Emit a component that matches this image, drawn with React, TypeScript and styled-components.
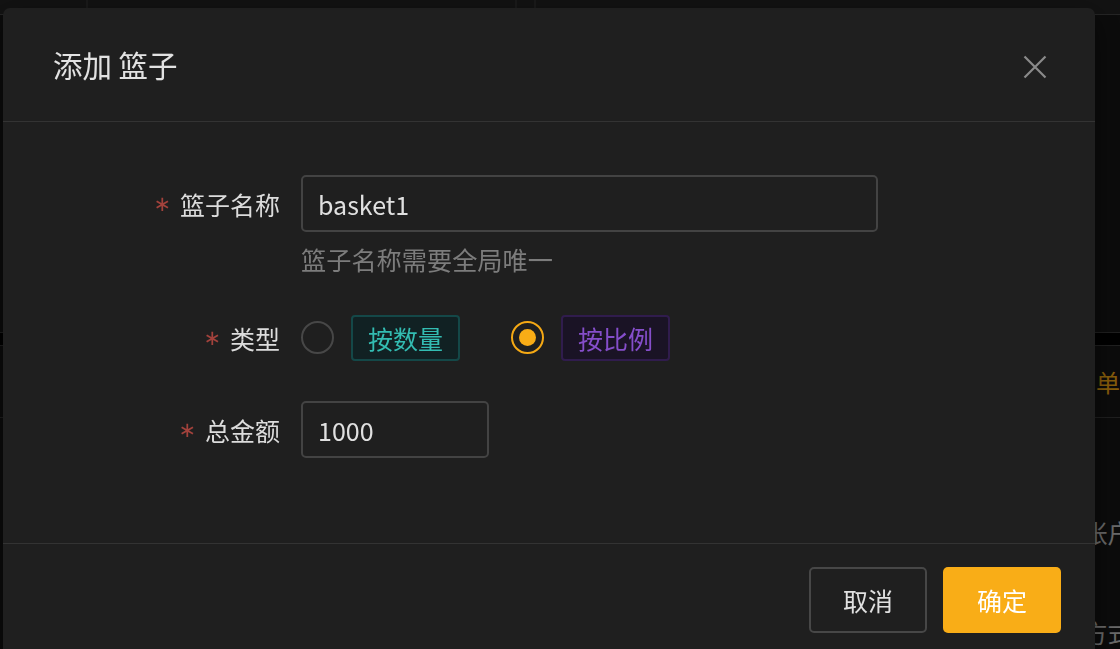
import React, { useState } from 'react';
import styled, { createGlobalStyle } from 'styled-components';

const GlobalStyle = createGlobalStyle`
  html, body, #root {
    margin: 0;
    height: 100%;
  }
  body {
    background: #141414;
    overflow: hidden;
    font-family: "Noto Sans CJK SC", "Noto Sans", sans-serif;
  }
`;

// Page behind the dialog
const Backdrop = styled.div`
  height: 100%;
  display: flex;
  flex-direction: column;
  background: #161616;
`;

const TopBar = styled.div`
  flex: 0 0 14px;
  background: #222222;
  border-bottom: 1px solid #444444;
  display: flex;
`;

const TopCell = styled.div<{ $w: number }>`
  flex: 0 0 ${p => p.$w}px;
  border-right: 2px solid #303030;
`;

const Upper = styled.div`
  flex: 0 0 317px;
  background: #161616;
`;

const TabStrip = styled.div`
  flex: 0 0 12px;
  background: #000000;
  border-top: 1px solid #3a3a3a;
`;

const HeadRow = styled.div`
  flex: 0 0 71px;
  display: flex;
  align-items: center;
  padding-left: 1096px;
  border-top: 1px solid #3a3a3a;
  border-bottom: 1px solid #3a3a3a;
  font-size: 24px;
  color: #faad14;
  white-space: nowrap;
`;

const BodyRows = styled.div`
  flex: 1;
  display: flex;
  flex-direction: column;
  gap: 60px;
  padding: 95px 0 0 1083px;
`;

const BodyLine = styled.div`
  height: 40px;
  line-height: 40px;
  font-size: 24.5px;
  color: #c4c4c4;
  white-space: nowrap;
`;

const Mask = styled.div`
  position: fixed;
  inset: 0;
  background: rgba(0, 0, 0, 0.45);
`;

// Dialog
const Modal = styled.div`
  position: fixed;
  top: 8px;
  left: 3px;
  width: 1092px;
  background: #1f1f1f;
  border-radius: 7px;
  box-shadow: 0 10px 30px rgba(0, 0, 0, 0.5);
  color: #dcdcdc;
`;

const Header = styled.div`
  height: 114px;
  box-sizing: border-box;
  padding: 0 48px 0 50px;
  display: flex;
  align-items: center;
  justify-content: space-between;
  border-bottom: 1px solid #333333;
`;

const Title = styled.div`
  font-size: 29.5px;
  font-weight: 400;
  color: #e2e2e2;
  padding-bottom: 2px;
`;

const CloseButton = styled.button`
  width: 24px;
  height: 24px;
  padding: 0;
  border: none;
  background: none;
  cursor: pointer;
  display: flex;
  margin-top: 4px;
`;

const Body = styled.div`
  padding: 53px 0 85px;
`;

const FormRow = styled.div<{ $top?: number }>`
  display: grid;
  grid-template-columns: 277px 1fr;
  column-gap: 21px;
  margin-top: ${p => p.$top ?? 0}px;
`;

const Label = styled.label`
  height: 57px;
  display: flex;
  align-items: center;
  justify-content: flex-end;
  font-size: 25px;
  color: #dcdcdc;
  white-space: nowrap;
`;

const Required = styled.span`
  font-family: "DejaVu Sans", sans-serif;
  font-size: 21px;
  color: #a3423c;
  margin-right: 9px;
`;

const Control = styled.div`
  display: flex;
  flex-direction: column;
  align-items: flex-start;
`;

const Input = styled.input<{ $w: number }>`
  width: ${p => p.$w}px;
  height: 57px;
  box-sizing: border-box;
  padding: 0 15px;
  border: 2px solid #434343;
  border-radius: 5px;
  background: transparent;
  color: #e0e0e0;
  font-family: inherit;
  font-size: 25px;
  outline: none;
`;

const Help = styled.div`
  margin-top: 8px;
  line-height: 39px;
  font-size: 25.2px;
  color: #7c7c7c;
`;

const RadioGroup = styled.div`
  height: 57px;
  display: flex;
  align-items: center;
  gap: 51px;
`;

const RadioOption = styled.label`
  display: flex;
  align-items: center;
  gap: 17px;
  cursor: pointer;
`;

const RadioCircle = styled.span<{ $checked: boolean }>`
  width: 33px;
  height: 33px;
  box-sizing: border-box;
  border-radius: 50%;
  border: 2px solid ${p => (p.$checked ? '#f5a914' : '#474747')};
  display: flex;
  align-items: center;
  justify-content: center;

  &::after {
    content: '';
    display: ${p => (p.$checked ? 'block' : 'none')};
    width: 17px;
    height: 17px;
    border-radius: 50%;
    background: #f8ac16;
  }
`;

const Tag = styled.span<{ $tone: 'cyan' | 'purple' }>`
  height: 46px;
  box-sizing: border-box;
  padding: 0 15px;
  display: flex;
  align-items: center;
  border-radius: 4px;
  font-size: 25px;
  border: 2px solid ${p => (p.$tone === 'cyan' ? '#144848' : '#301c4d')};
  background: ${p => (p.$tone === 'cyan' ? '#112123' : '#1a1325')};
  color: ${p => (p.$tone === 'cyan' ? '#33bcb2' : '#854eca')};
`;

const Footer = styled.div`
  border-top: 1px solid #333333;
  padding: 23px 34px;
  display: flex;
  justify-content: flex-end;
  gap: 16px;
`;

const Button = styled.button<{ $primary?: boolean }>`
  width: 118px;
  height: 66px;
  box-sizing: border-box;
  border-radius: 5px;
  font-family: inherit;
  font-size: 25px;
  font-weight: 400;
  cursor: pointer;
  border: ${p => (p.$primary ? 'none' : '2px solid #474747')};
  background: ${p => (p.$primary ? '#f9ad17' : 'transparent')};
  color: ${p => (p.$primary ? '#ffffff' : '#e0e0e0')};
`;

const CloseIcon = () => (
  <svg width="24" height="24" viewBox="0 0 24 24" fill="none">
    <path d="M1.5 1.5 L22.5 22.5 M22.5 1.5 L1.5 22.5" stroke="#8a8a8a" strokeWidth="2.2" />
  </svg>
);

const App: React.FC = () => {
  const [name, setName] = useState('basket1');
  const [amount, setAmount] = useState('1000');
  const [type, setType] = useState<'qty' | 'ratio'>('ratio');

  return (
    <>
      <GlobalStyle />
      <Backdrop>
        <TopBar>
          <TopCell $w={86} />
          <TopCell $w={427} />
          <TopCell $w={17} />
        </TopBar>
        <Upper />
        <TabStrip />
        <HeadRow>单</HeadRow>
        <BodyRows>
          <BodyLine>张户</BodyLine>
          <BodyLine>方式</BodyLine>
        </BodyRows>
      </Backdrop>
      <Mask />
      <Modal>
        <Header>
          <Title>添加 篮子</Title>
          <CloseButton aria-label="close">
            <CloseIcon />
          </CloseButton>
        </Header>
        <Body>
          <FormRow>
            <Label>
              <Required>∗</Required>篮子名称
            </Label>
            <Control>
              <Input $w={577} value={name} onChange={e => setName(e.target.value)} />
              <Help>篮子名称需要全局唯一</Help>
            </Control>
          </FormRow>
          <FormRow $top={30}>
            <Label>
              <Required>∗</Required>类型
            </Label>
            <RadioGroup>
              <RadioOption onClick={() => setType('qty')}>
                <RadioCircle $checked={type === 'qty'} />
                <Tag $tone="cyan">按数量</Tag>
              </RadioOption>
              <RadioOption onClick={() => setType('ratio')}>
                <RadioCircle $checked={type === 'ratio'} />
                <Tag $tone="purple">按比例</Tag>
              </RadioOption>
            </RadioGroup>
          </FormRow>
          <FormRow $top={35}>
            <Label>
              <Required>∗</Required>总金额
            </Label>
            <Control>
              <Input $w={188} value={amount} onChange={e => setAmount(e.target.value)} />
            </Control>
          </FormRow>
        </Body>
        <Footer>
          <Button>取消</Button>
          <Button $primary>确定</Button>
        </Footer>
      </Modal>
    </>
  );
};

export default App;
